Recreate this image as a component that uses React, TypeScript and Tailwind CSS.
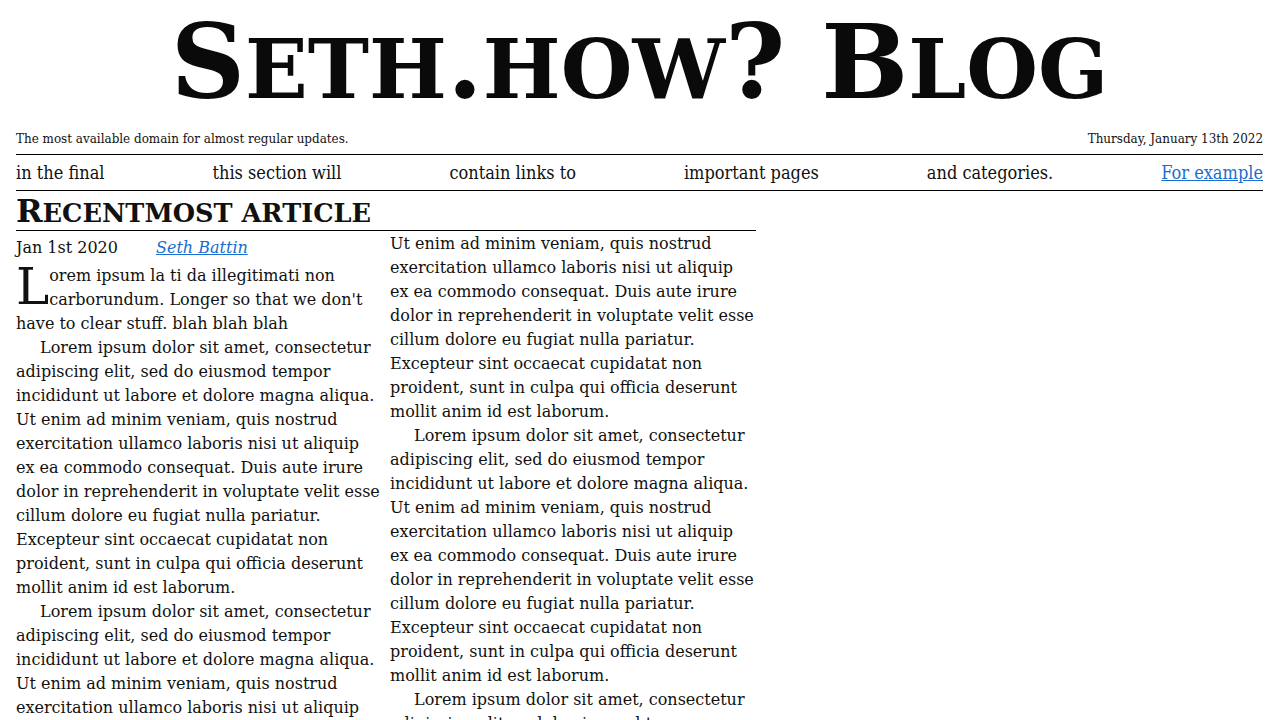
import React from "react";

const LOREM =
  "Lorem ipsum dolor sit amet, consectetur adipiscing elit, sed do eiusmod tempor incididunt ut labore et dolore magna aliqua. Ut enim ad minim veniam, quis nostrud exercitation ullamco laboris nisi ut aliquip ex ea commodo consequat. Duis aute irure dolor in reprehenderit in voluptate velit esse cillum dolore eu fugiat nulla pariatur. Excepteur sint occaecat cupidatat non proident, sunt in culpa qui officia deserunt mollit anim id est laborum.";
const HEAD = "Lorem ipsum dolor sit amet, consectetur adipiscing elit, sed do eiusmod tempor incididunt ut labore et dolore magna aliqua.";
const TAIL =
  "Ut enim ad minim veniam, quis nostrud exercitation ullamco laboris nisi ut aliquip ex ea commodo consequat. Duis aute irure dolor in reprehenderit in voluptate velit esse cillum dolore eu fugiat nulla pariatur. Excepteur sint occaecat cupidatat non proident, sunt in culpa qui officia deserunt mollit anim id est laborum.";

const serif = "font-['DejaVu_Serif',serif]";
const cond = "font-['DejaVu_Serif_Condensed','DejaVu_Serif',serif] [font-stretch:condensed]";

function Sc({ children }: { children: string }) {
  return <span className="text-[0.8em] leading-none uppercase">{children}</span>;
}

export default function App() {
  const nav = ["in the final", "this section will", "contain links to", "important pages", "and categories."];
  return (
    <div className={`${serif} min-h-screen bg-white px-4 text-[#111]`}>
      <header>
        <h1 className="text-center text-[103px] font-bold leading-[124px] text-[#0a0a0a]">
          S<Sc>eth</Sc>.<Sc>how</Sc>? B<Sc>log</Sc>
        </h1>
        <div className={`${cond} flex justify-between pt-[6px] pb-[6px] text-[13.3px] leading-[18px]`}>
          <span>The most available domain for almost regular updates.</span>
          <span>Thursday, January 13th 2022</span>
        </div>
        <nav className={`${cond} flex justify-between border-y border-black py-[6px] text-[18px] leading-[23px]`}>
          {nav.map((n) => (
            <span key={n}>{n}</span>
          ))}
          <a href="#" className="text-[#1a6ed0] underline">
            For example
          </a>
        </nav>
      </header>
      <main className="w-[740px]">
        <h2 className="border-b border-black pt-[2px] text-[32px] font-bold leading-[37px]">
          R<Sc>ecentmost article</Sc>
        </h2>
        <div className="grid grid-cols-2 gap-x-2 pt-px text-[16px] leading-6">
          <div>
            <div className="flex h-8 items-center">
              <span className="w-[140px]">Jan 1st 2020</span>
              <a href="#" className="italic text-[#1a6ed0] underline">
                Seth Battin
              </a>
            </div>
            <p>
              <span className="float-left mt-[1px] text-[50px] leading-[44px]">L</span>
              orem ipsum la ti da illegitimati non carborundum. Longer so that we don't have to clear stuff. blah blah blah
            </p>
            <p className="indent-6">{LOREM}</p>
            <p className="indent-6">{LOREM}</p>
            <p className="indent-6">{LOREM}</p>
            <p className="indent-6">{HEAD}</p>
          </div>
          <div>
            <p>{TAIL}</p>
            <p className="indent-6">{LOREM}</p>
            <p className="indent-6">{LOREM}</p>
            <p className="indent-6">{LOREM}</p>
          </div>
        </div>
      </main>
    </div>
  );
}
